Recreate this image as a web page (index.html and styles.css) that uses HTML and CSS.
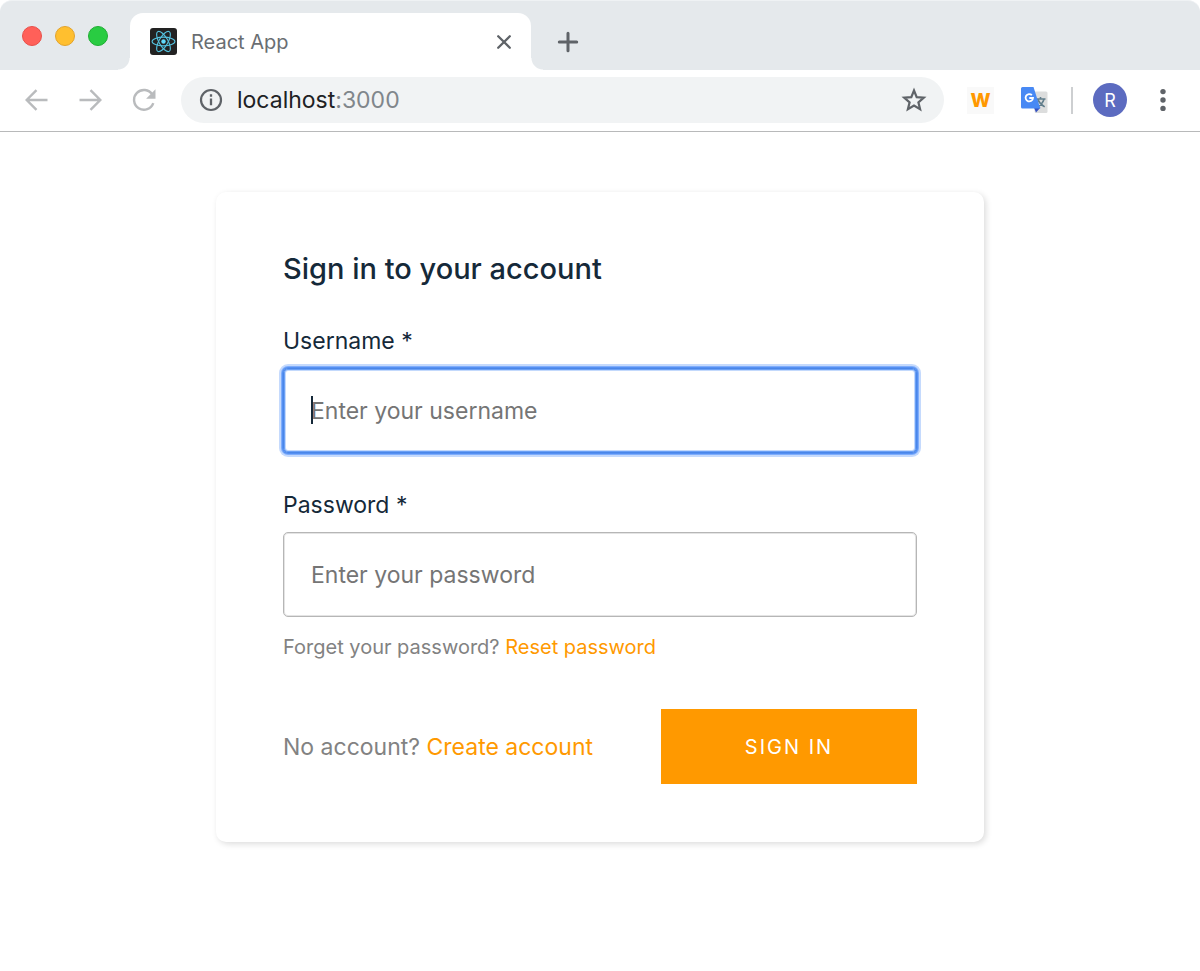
FILE: index.html
```html
<!DOCTYPE html>
<html lang="en">
<head>
<meta charset="utf-8">
<meta name="viewport" content="width=device-width, initial-scale=1">
<title>React App</title>
<link rel="stylesheet" href="styles.css">
</head>
<body>
<header class="browser">
  <div class="tab-strip">
    <div class="lights">
      <button class="light light-close" aria-label="Close window"></button>
      <button class="light light-min" aria-label="Minimize window"></button>
      <button class="light light-max" aria-label="Zoom window"></button>
    </div>
    <div class="tab">
      <svg class="favicon" viewBox="0 0 27 27" aria-hidden="true">
        <rect width="27" height="27" rx="3" fill="#222222"/>
        <g fill="none" stroke="#53c1de" stroke-width="1.1">
          <ellipse cx="13.5" cy="13.5" rx="11.4" ry="4.4"/>
          <ellipse cx="13.5" cy="13.5" rx="11.4" ry="4.4" transform="rotate(60 13.5 13.5)"/>
          <ellipse cx="13.5" cy="13.5" rx="11.4" ry="4.4" transform="rotate(120 13.5 13.5)"/>
        </g>
        <circle cx="13.5" cy="13.5" r="2.2" fill="#61dafb"/>
      </svg>
      <span class="tab-title">React App</span>
      <button class="icon-button" aria-label="Close tab">
        <svg width="16" height="16" viewBox="0 0 16 16"><path d="M2.200 2.200l11.600 11.600M13.800 2.200L2.200 13.800" fill="none" stroke="#5f6368" stroke-width="2.300" stroke-linecap="round"/></svg>
      </button>
    </div>
    <button class="icon-button new-tab" aria-label="New tab">
      <svg width="22" height="22" viewBox="0 0 22 22"><path d="M11 2.300v17.400M2.300 11h17.400" fill="none" stroke="#5f6368" stroke-width="3" stroke-linecap="round"/></svg>
    </button>
  </div>
  <div class="toolbar">
    <div class="nav">
      <button class="icon-button" aria-label="Back">
        <svg width="24" height="24" viewBox="0 0 24 24"><path d="M23.500 12H3.500M12.500 2.200L2.700 12l9.800 9.800" fill="none" stroke="#b9bbbd" stroke-width="2.400"/></svg>
      </button>
      <button class="icon-button" aria-label="Forward">
        <svg width="24" height="24" viewBox="0 0 24 24"><path d="M1.500 12h20.500M12.500 2.200l9.800 9.800-9.800 9.800" fill="none" stroke="#b9bbbd" stroke-width="2.400"/></svg>
      </button>
      <button class="icon-button" aria-label="Reload">
        <svg width="24" height="24" viewBox="0 0 24 24"><path d="M20.300 6.500A9.900 9.900 0 1 0 21.300 15.200" fill="none" stroke="#b9bbbd" stroke-width="2.400"/><path d="M23.500 1.200v9.600h-9.400z" fill="#b9bbbd"/></svg>
      </button>
    </div>
    <div class="address">
      <svg width="24" height="24" viewBox="0 0 24 24" aria-hidden="true"><circle cx="12" cy="12" r="10" fill="none" stroke="#5f6368" stroke-width="2.2"/><path d="M12 10.500v6.800M12 6.300v2.400" stroke="#5f6368" stroke-width="2.300"/></svg>
      <span class="url">localhost<span class="port">:3000</span></span>
      <button class="icon-button" aria-label="Bookmark this page">
        <svg width="26" height="26" viewBox="0 0 26 26"><path d="M13 3.500l2.700 6.600 7.100.6-5.400 4.600 1.700 6.900-6.100-3.700-6.100 3.700 1.700-6.900-5.400-4.600 7.100-.6z" fill="none" stroke="#5f6368" stroke-width="2.200"/></svg>
      </button>
    </div>
    <div class="extensions">
      <button class="icon-button extension-w" aria-label="W extension">W</button>
      <button class="icon-button" aria-label="Translate">
        <svg width="28" height="28" viewBox="0 0 28 28">
          <path d="M10 5.500h16a1.500 1.500 0 0 1 1.500 1.500v18.500a1.500 1.500 0 0 1-1.500 1.500H15z" fill="#dcdddd"/>
          <path d="M16 13h9.500M20.500 11v2M17.500 13.200c1.500 3.200 4 5.800 7.200 7.700M24 13.200c-1 3.300-3.500 6-7 8" fill="none" stroke="#607d8b" stroke-width="1.600"/>
          <path d="M14 21.500h6.500L16 26.500z" fill="#3450c0"/>
          <path d="M2.500 1h11l6.800 21.500H2.500A1.500 1.500 0 0 1 1 21V2.500A1.500 1.500 0 0 1 2.500 1z" fill="#4889f4"/>
          <path d="M11.900 9.100a3.700 3.700 0 1 0 1.100 2.900H9.300" fill="none" stroke="#fff" stroke-width="1.800"/>
        </svg>
      </button>
      <span class="divider"></span>
      <button class="icon-button avatar" aria-label="Profile">R</button>
      <button class="icon-button" aria-label="Menu">
        <svg width="24" height="24" viewBox="0 0 24 24"><g fill="#5f6368"><circle cx="12" cy="3.600" r="2.700"/><circle cx="12" cy="12" r="2.700"/><circle cx="12" cy="20.400" r="2.700"/></g></svg>
      </button>
    </div>
  </div>
</header>
<main class="page">
  <form class="card">
    <h1 class="title">Sign in to your account</h1>
    <div class="field">
      <label class="label" for="username">Username *</label>
      <div class="control">
        <input class="input input-focused" id="username" type="text" placeholder="Enter your username">
        <span class="caret"></span>
      </div>
    </div>
    <div class="field">
      <label class="label" for="password">Password *</label>
      <input class="input" id="password" type="password" placeholder="Enter your password">
      <p class="hint">Forget your password? <a class="link" href="#reset">Reset password</a></p>
    </div>
    <div class="actions">
      <p class="signup">No account? <a class="link" href="#create">Create account</a></p>
      <button class="submit" type="button">SIGN IN</button>
    </div>
  </form>
</main>
</body>
</html>
```
FILE: styles.css
```css
* {
  box-sizing: border-box;
}

body {
  margin: 0;
  background: #fff;
  color: #152939;
  font-family: Inter, "Liberation Sans", sans-serif;
}

h1,
p {
  margin: 0;
}

button,
input {
  font-family: inherit;
}

.icon-button {
  display: flex;
  align-items: center;
  justify-content: center;
  flex: none;
  padding: 0;
  border: 0;
  background: none;
}

.browser {
  border-bottom: 1px solid #b8b9ba;
}

.tab-strip {
  display: flex;
  align-items: flex-end;
  height: 70px;
  padding-left: 22px;
  border-top: 1px solid #eff2f4;
  border-radius: 12px 12px 0 0;
  background: #e5e9ec;
}

.lights {
  display: flex;
  gap: 13px;
  width: 108px;
  padding-bottom: 24px;
}

.light {
  width: 20px;
  height: 20px;
  padding: 0;
  border: 1px solid;
  border-radius: 50%;
}

.light-close {
  background: #ff6059;
  border-color: #e8504a;
}

.light-min {
  background: #ffbf2f;
  border-color: #e2a32c;
}

.light-max {
  background: #29cc42;
  border-color: #1fae33;
}

.tab {
  position: relative;
  display: flex;
  align-items: center;
  gap: 14px;
  flex: 0 1 401px;
  height: 57px;
  padding: 0 19px 0 20px;
  border-radius: 13px 13px 0 0;
  background: #fff;
}

.tab::before,
.tab::after {
  content: "";
  position: absolute;
  bottom: 0;
  width: 12px;
  height: 12px;
}

.tab::before {
  right: 100%;
  background: radial-gradient(circle at 0 0, #e5e9ec 11px, #fff 12px);
}

.tab::after {
  left: 100%;
  background: radial-gradient(circle at 100% 0, #e5e9ec 11px, #fff 12px);
}

.favicon {
  flex: none;
  width: 27px;
  height: 27px;
}

.tab-title {
  flex: 1;
  color: #6a6e72;
  font-size: 20px;
  line-height: 24px;
}

.new-tab {
  height: 57px;
  margin-left: 26px;
}

.toolbar {
  display: flex;
  align-items: center;
  height: 61px;
  padding: 0 25px 1px 24px;
}

.nav {
  display: flex;
  gap: 30px;
  margin-right: 25px;
}

.address {
  display: flex;
  align-items: center;
  gap: 14px;
  flex: 1;
  height: 46px;
  padding: 0 17px 0 18px;
  border-radius: 23px;
  background: #f1f3f4;
}

.url {
  flex: 1;
  color: #202124;
  font-size: 23px;
  line-height: 28px;
}

.port {
  color: #80868b;
}

.extensions {
  display: flex;
  align-items: center;
  margin-left: 23px;
}

.extension-w {
  width: 27px;
  height: 27px;
  margin-right: 26px;
  background: #f9f9f9;
  color: #ff9800;
  font-size: 19px;
  font-weight: 800;
}

.divider {
  width: 2px;
  height: 27px;
  margin: 0 20px 0 23px;
  background: #cdcfd1;
}

.avatar {
  width: 34px;
  height: 34px;
  margin-right: 24px;
  border-radius: 50%;
  background: #5c6bc0;
  color: #fff;
  font-size: 18px;
}

.page {
  padding: 60px 24px;
}

.card {
  max-width: 768px;
  margin: 0 auto;
  padding: 59px 67px 58px;
  border-radius: 10px;
  background: #fff;
  box-shadow: 2px 2px 6px rgba(0, 0, 0, 0.14);
}

.title {
  margin-bottom: 40px;
  font-size: 29px;
  font-weight: 500;
  line-height: 36px;
}

.field {
  margin-bottom: 38px;
}

.label {
  display: block;
  margin-bottom: 13px;
  font-size: 23px;
  line-height: 28px;
}

.control {
  position: relative;
}

.input {
  display: block;
  width: 100%;
  height: 85px;
  padding: 0 27px;
  border: 1px solid #b6b6b6;
  border-radius: 5px;
  background: #fff;
  color: #152939;
  font-size: 23px;
  box-shadow: inset 0 0 0 1px #e4e4e4;
}

.input::placeholder {
  color: #757575;
  opacity: 1;
}

.input-focused {
  border-color: #4a86e8;
  outline: none;
  box-shadow: inset 0 0 0 1px #6aa0f6, inset 0 0 0 2px #c3d9fc, 0 0 0 1px #5590f2, 0 0 0 2px #7fadfb, 0 0 0 4px #c5dafd;
}

.caret {
  position: absolute;
  top: 28px;
  left: 28px;
  width: 2px;
  height: 28px;
  background: #152939;
}

.hint {
  margin-top: 18px;
  color: #828282;
  font-size: 20px;
  line-height: 24px;
}

.link {
  color: #ff9900;
  text-decoration: none;
}

.actions {
  display: flex;
  align-items: center;
  justify-content: space-between;
  margin-top: 50px;
}

.signup {
  color: #828282;
  font-size: 23px;
  line-height: 28px;
}

.submit {
  width: 256px;
  height: 75px;
  padding: 0;
  border: 0;
  background: #ff9900;
  color: #fff;
  font-size: 20px;
  letter-spacing: 2px;
}
```
